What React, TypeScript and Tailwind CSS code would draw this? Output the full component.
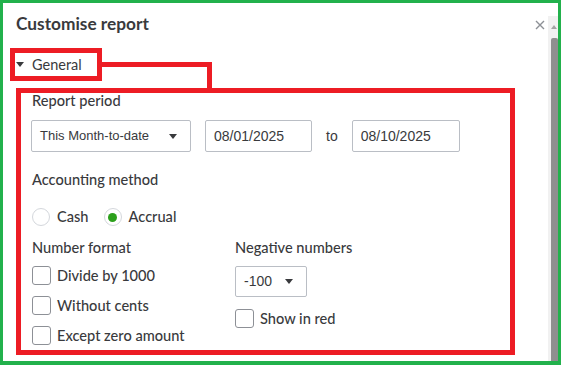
import React from 'react'

const label = "font-['Lato',sans-serif] text-[14.6px] font-medium text-[#393a3d]"
const field = "font-['Liberation_Sans',Arial,sans-serif] text-[#393a3d]"

function Caret() {
  return <span className="block w-0 h-0 border-l-[4px] border-r-[4px] border-t-[5px] border-l-transparent border-r-transparent border-t-[#393a3d]" />
}

function Check({ text }: { text: string }) {
  return (
    <label className="flex items-center gap-[6px] h-[19px]">
      <span className="w-[19px] h-[19px] rounded-[3px] border border-[#8d9096] bg-white shrink-0" />
      <span className={`${label} leading-4`}>{text}</span>
    </label>
  )
}

function Radio({ text, on }: { text: string; on?: boolean }) {
  return (
    <label className="flex items-center gap-[7px]">
      <span className="w-[18px] h-[18px] rounded-full border border-[#d4d7dc] flex items-center justify-center">
        {on && <span className="w-[9px] h-[9px] rounded-full bg-[#2ca01c]" />}
      </span>
      <span className={`${label} leading-4`}>{text}</span>
    </label>
  )
}

export default function App() {
  return (
    <div className="relative w-[561px] h-[365px] border-[3px] border-b-[4px] border-[#22b14c] bg-white flex overflow-hidden">
      {/* annotation connector */}
      <div className="absolute left-[94px] top-[59px] w-[115px] h-[5px] bg-[#ed1c24]" />
      <div className="absolute left-[204px] top-[59px] w-[5px] h-[26px] bg-[#ed1c24]" />

      <div className="flex-1 flex flex-col">
        <div className="flex items-center justify-between pl-[13px] pt-[10px] pr-[3px]">
          <h1 className="font-['Lato',sans-serif] font-bold text-[17.3px] leading-[22px] text-[#393a3d]">Customise report</h1>
          <svg width="10" height="10" viewBox="0 0 10 10" className="mt-px">
            <path d="M1 1L9 9M9 1L1 9" stroke="#8d9096" strokeWidth="1.4" />
          </svg>
        </div>

        <div className="ml-[7px] mt-[13px] w-[92px] h-[33px] border-[5px] border-[#ed1c24] flex items-center pl-px">
          <Caret />
          <span className="ml-2 font-['Lato',sans-serif] text-[14.5px] leading-4 text-[#393a3d]">General</span>
        </div>

        <div className="ml-[13px] mt-[7px] w-[499px] h-[267px] border-[5px] border-[#ed1c24] pl-[11px]">
          <div className={`${label} leading-4`}>Report period</div>
          <div className="flex items-center mt-[11px] -ml-px">
            <div className={`${field} w-[160px] h-[32px] border border-[#babec5] rounded-[2px] flex items-center justify-between pl-2 pr-[13px] text-[13px]`}>
              <span>This Month-to-date</span>
              <Caret />
            </div>
            <div className={`${field} ml-[14px] w-[107px] h-[32px] border border-[#babec5] rounded-[2px] flex items-center pl-2 text-[14px]`}>08/01/2025</div>
            <span className={`${field} mx-[14px] text-[14px]`}>to</span>
            <div className={`${field} w-[108px] h-[32px] border border-[#babec5] rounded-[2px] flex items-center pl-2 text-[14px]`}>08/10/2025</div>
          </div>

          <div className={`${label} leading-4 mt-[20px]`}>Accounting method</div>
          <div className="flex items-center gap-[15px] mt-[20px]">
            <Radio text="Cash" />
            <Radio text="Accrual" on />
          </div>

          <div className="grid grid-cols-[203px_1fr] mt-[14px]">
            <div className="flex flex-col">
              <div className={`${label} leading-4`}>Number format</div>
              <div className="flex flex-col gap-[11px] mt-[10px]">
                <Check text="Divide by 1000" />
                <Check text="Without cents" />
                <Check text="Except zero amount" />
              </div>
            </div>
            <div className="flex flex-col">
              <div className={`${label} leading-4`}>Negative numbers</div>
              <div className={`${field} mt-[10px] w-[72px] h-[31px] border border-[#babec5] rounded-[2px] flex items-center justify-between pl-2 pr-[13px] text-[14px]`}>
                <span>-100</span>
                <Caret />
              </div>
              <div className="mt-[12px]">
                <Check text="Show in red" />
              </div>
            </div>
          </div>
        </div>
      </div>

      <div className="w-[10px] mt-[13px] bg-[#f1f1f1] flex flex-col items-center">
        <span className="mt-[9px] ml-px block w-0 h-0 border-l-[3px] border-r-[3px] border-b-[4px] border-l-transparent border-r-transparent border-b-[#a3a3a3]" />
        <div className="self-end w-[7px] flex-1 mt-[9px] bg-[#8f8f8f] rounded-t-[2px]" />
      </div>
    </div>
  )
}
